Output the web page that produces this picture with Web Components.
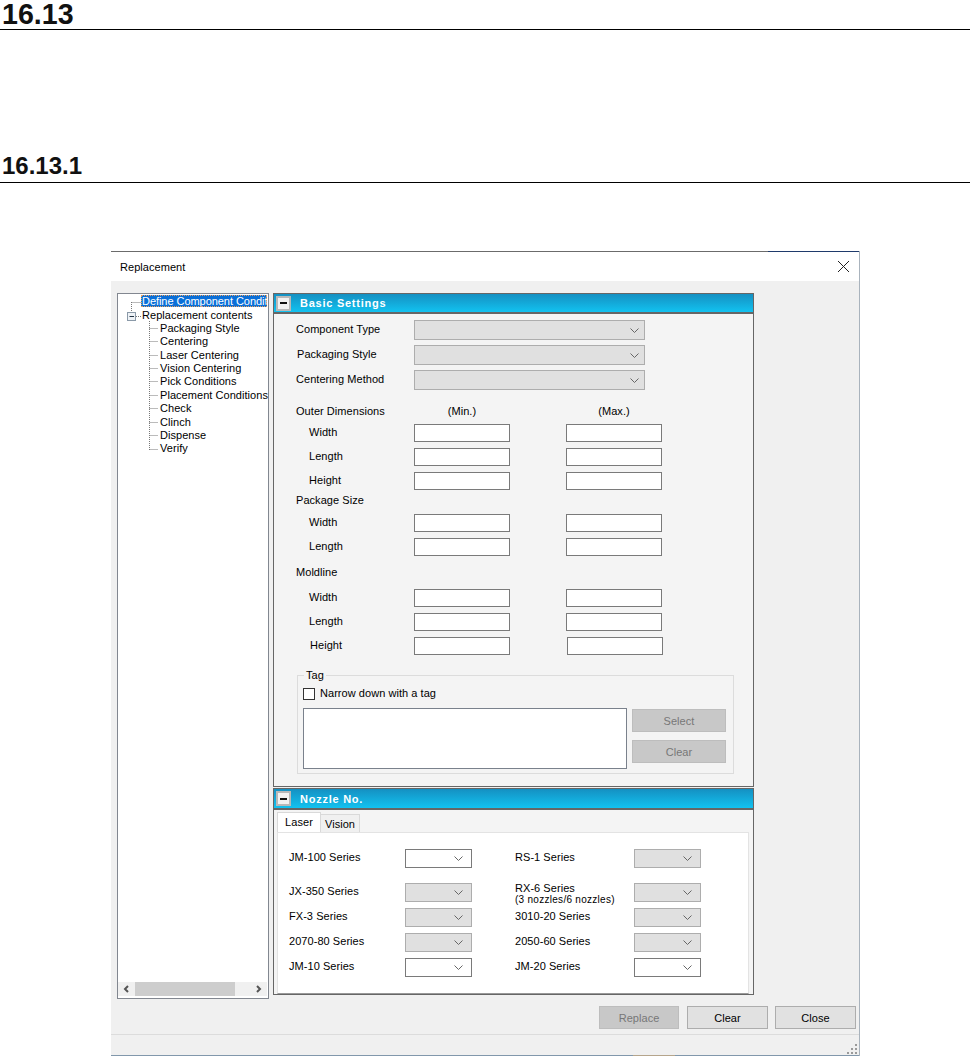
<!DOCTYPE html>
<html lang="en"><head><meta charset="utf-8"><title>Replacement</title>
<style>
html,body{margin:0;padding:0;background:#fff;overflow:hidden;height:1056px}
body{font:11px "Liberation Sans",Arial,sans-serif;letter-spacing:.05px;color:#000}
</style></head><body>
<x-heading size="28.6" style="--top:0px">16.13</x-heading>
<x-heading size="24" style="--top:123px">16.13.1</x-heading>
<x-window title="Replacement">
  <x-tree slot="tree"></x-tree>
  <x-panel heading="Basic Settings" style="--ph:494px;--hh:18px" slot="panels"><x-basic-form></x-basic-form></x-panel>
  <x-panel heading="Nozzle No." style="--ph:207px;--hh:19px;margin-top:1px" slot="panels"><x-nozzle-form></x-nozzle-form></x-panel>
  <x-button slot="actions" disabled style="--w:80px;margin-right:8px">Replace</x-button>
  <x-button slot="actions" style="--w:81px;margin-right:7px">Clear</x-button>
  <x-button slot="actions" style="--w:81px">Close</x-button>
</x-window>
<script>
const chevron='<svg width="9" height="5" viewBox="0 0 9 5" style="display:block"><path d="M.5 .5L4.5 4.5L8.5 .5" fill="none" stroke="#666" stroke-width="1"/></svg>';
class Base extends HTMLElement{
  constructor(){super();this.attachShadow({mode:'open'});}
  render(html){this.shadowRoot.innerHTML=html;}
}
customElements.define('x-heading',class extends Base{connectedCallback(){
  const s=+this.getAttribute('size');
  this.render(`<style>:host{display:block;height:29px;margin-top:var(--top);border-bottom:1px solid #000;box-sizing:content-box}
  div{font:bold ${s}px/1 "Liberation Sans",Arial,sans-serif;letter-spacing:0;color:#111;padding:${s>25?0:1}px 0 0 2px}</style><div><slot></slot></div>`);
}});
customElements.define('x-window',class extends Base{connectedCallback(){
  this.render(`<style>
  :host{display:flex;flex-direction:column;box-sizing:border-box;margin:68px 0 0 111px;width:749px;height:805px;background:#f0f0f0;border-right:1px solid #a9b3bd;position:relative}
  .top{height:1px;background:linear-gradient(to right,#6b6b6b 0 657px,#1f3a6b 657px)}
  .title{height:29px;background:#fff;display:flex;align-items:center;justify-content:space-between;padding:0 9px 0 9px;font-size:11px;letter-spacing:.05px}
  .title svg{display:block}
  .main{display:flex;gap:4px;height:706px;margin:12px 0 0 6px}
  .panels{display:flex;flex-direction:column;width:481px}
  .actions{display:flex;justify-content:flex-end;height:23px;margin:7px 3px 0 0}
  .sep{height:1px;background:#dcdcdc;margin-top:5px}
  .status{flex:1;display:flex;justify-content:flex-end;align-items:flex-end;padding:0 1px 0 0}
  .bot{height:1px;background:linear-gradient(to right,#8197ab 0 522px,#b5a58c 522px 564px,#8197ab 564px)}
  </style>
  <div class="top"></div>
  <div class="title"><span>${this.getAttribute('title')}</span>
    <svg width="13" height="13" viewBox="0 0 13 13"><path d="M1 1L12 12M12 1L1 12" stroke="#222" stroke-width="1" fill="none"/></svg></div>
  <div class="main"><slot name="tree"></slot><div class="panels"><slot name="panels"></slot></div></div>
  <div class="actions"><slot name="actions"></slot></div>
  <div class="sep"></div>
  <div class="status"><svg width="11" height="11" viewBox="0 0 11 11" fill="#9a9a9a"><rect x="8" y="0" width="2" height="2"/><rect x="4" y="4" width="2" height="2"/><rect x="8" y="4" width="2" height="2"/><rect x="0" y="8" width="2" height="2"/><rect x="4" y="8" width="2" height="2"/><rect x="8" y="8" width="2" height="2"/></svg></div>
  <div class="bot"></div>`);
}});
customElements.define('x-tree',class extends Base{connectedCallback(){
  const kids=['Packaging Style','Centering','Laser Centering','Vision Centering','Pick Conditions','Placement Conditions','Check','Clinch','Dispense','Verify'];
  const ys=[34,47,61,74,87,101,114,128,141,155];
  const lines='M13.5 8V18M13.5 8.5H23M18 22.5H23M31.5 27V156'+ys.map(y=>`M31.5 ${y}.5H40`).join('');
  this.render(`<style>
  :host{display:flex;flex-direction:column;box-sizing:border-box;width:152px;height:706px;background:#fff;border:1px solid #828790;position:relative;overflow:hidden}
  .list{flex:1;padding-top:1px;overflow:hidden;white-space:nowrap}
  .row{height:13.4px;line-height:13px;padding-left:24px}
  .kid{padding-left:42px}
  .rep{line-height:14px}
  .sel{margin-left:23px;padding-left:1px;background:#0a6fd8;color:#fff;height:12.4px;margin-bottom:1px;line-height:12px;letter-spacing:-.05px;outline:1px dotted #e8a060;outline-offset:-1px;margin-right:1px}
  svg.lines{position:absolute;left:0;top:0}
  .bar{height:14px;margin:0 1px 2px 0;background:#f0f0f0;display:flex;align-items:center;justify-content:space-between;padding:0 5px;position:relative}
  .thumb{position:absolute;left:17px;width:100px;top:0;bottom:0;background:#cdcdcd}
  </style>
  <div class="list"><div class="row sel">Define Component Condit</div><div class="row rep">Replacement contents</div>
  ${kids.map(k=>`<div class="row kid">${k}</div>`).join('')}</div>
  <svg class="lines" width="60" height="170"><path d="${lines}" fill="none" stroke="#777" stroke-dasharray="1 1"/>
    <rect x="9.5" y="18.5" width="8" height="8" fill="#eef2f6" stroke="#8a99a8"/><path d="M11.5 22.5H16" stroke="#234"/></svg>
  <div class="bar"><svg width="6" height="8" viewBox="0 0 6 8"><path d="M5 1L2 4L5 7" fill="none" stroke="#555" stroke-width="2"/></svg><div class="thumb"></div><svg width="6" height="8" viewBox="0 0 6 8"><path d="M1 1L4 4L1 7" fill="none" stroke="#555" stroke-width="2"/></svg></div>`);
}});
customElements.define('x-panel',class extends Base{connectedCallback(){
  this.render(`<style>
  :host{display:flex;flex-direction:column;box-sizing:border-box;height:var(--ph);width:481px;background:#f4f4f4;border:1px solid #666}
  .hd{height:var(--hh);background:linear-gradient(#1590c2,#12c2f0);border-bottom:2px solid #666;display:flex;align-items:center;flex:none}
  .mn{width:15px;height:15px;box-sizing:border-box;margin-left:2px;background:#f2f2f2;border:2px solid #b8b8b8;display:flex;align-items:center;justify-content:center}
  .mn i{display:block;width:7px;height:2px;background:#111}
  .t{margin-left:9px;color:#fff;font-weight:bold;font-size:11px;letter-spacing:.75px}
  </style><div class="hd"><div class="mn"><i></i></div><span class="t">${this.getAttribute('heading')}</span></div><slot></slot>`);
}});
customElements.define('x-combo',class extends Base{connectedCallback(){
  const on=this.hasAttribute('enabled');
  this.render(`<style>:host{display:flex;align-items:center;justify-content:flex-end;box-sizing:border-box;width:var(--w,67px);height:var(--h,19px);padding-right:var(--pr,8px);
  background:${on?'#fff':'#e0e0e0'};border:1px solid ${on?'#7a7a7a':'#adadad'}}</style>${chevron}`);
}});
customElements.define('x-field',class extends Base{connectedCallback(){
  this.render(`<style>:host{display:block;box-sizing:border-box;width:96px;height:18px;background:#fff;border:1px solid #7a7a7a}</style>`);
}});
customElements.define('x-row',class extends Base{connectedCallback(){
  const ind=this.getAttribute('indent')||22;
  this.render(`<style>:host{display:grid;grid-template-columns:140px 96px 56px 96px;height:var(--h,24px);align-items:start}
  .l{padding:var(--pt,1px) 0 0 ${ind}px;line-height:14px;white-space:nowrap}
  ::slotted([slot=b]){grid-column:4}
  </style><div class="l">${this.getAttribute('label')||''}</div><slot name="a"></slot><span></span><slot name="b"></slot>`);
}});
customElements.define('x-button',class extends Base{connectedCallback(){
  const d=this.hasAttribute('disabled');
  this.render(`<style>:host{display:flex;align-items:center;justify-content:center;box-sizing:border-box;width:var(--w,94px);height:23px;
  background:${d?'#c8c8c8':'#e1e1e1'};border:1px solid ${d?'#bdbdbd':'#adadad'};color:${d?'#777':'#000'}}</style><slot></slot>`);
}});
customElements.define('x-basic-form',class extends Base{connectedCallback(){
  const f=(s='')=>`<x-field slot="a"></x-field><x-field slot="b"${s}></x-field>`;
  this.render(`<style>
  :host{display:block;padding-top:6px}
  x-combo{--w:231px;--h:20px;--pr:5px}
  .group{position:relative;box-sizing:border-box;width:437px;height:99px;margin:20px 0 0 23px;border:1px solid #dcdcdc;padding:12px 7px 0 5px}
  .legend{position:absolute;left:6px;top:-8px;padding:0 2px;background:#f4f4f4;line-height:14px}
  .chk{display:flex;align-items:flex-start;gap:5px;height:13px}
  .chk i{display:block;box-sizing:border-box;width:12px;height:12px;background:#fff;border:1px solid #333}
  .chk span{line-height:12px;margin-top:-1px}
  .b{display:flex;justify-content:space-between;margin-top:7px}
  .ta{box-sizing:border-box;width:324px;height:61px;background:#fff;border:1px solid #7a818c}
  .btns{display:flex;flex-direction:column;gap:8px;margin-top:1px}
  </style>
  <x-row label="Component Type" style="--h:25px;--pt:2px"><x-combo slot="a"></x-combo></x-row>
  <x-row label="Packaging Style" indent="23" style="--h:25px;--pt:2px"><x-combo slot="a"></x-combo></x-row>
  <x-row label="Centering Method" style="--h:20px;--pt:2px"><x-combo slot="a"></x-combo></x-row>
  <x-row label="Outer Dimensions" style="--h:34px;--pt:14px"><span slot="a" style="padding-top:14px;display:block;text-align:center;line-height:14px">(Min.)</span><span slot="b" style="padding-top:14px;display:block;text-align:center;line-height:14px">(Max.)</span></x-row>
  <x-row label="Width" indent="35">${f()}</x-row>
  <x-row label="Length" indent="35">${f()}</x-row>
  <x-row label="Height" indent="35" style="--h:18px">${f()}</x-row>
  <x-row label="Package Size" style="--pt:3px"></x-row>
  <x-row label="Width" indent="35">${f()}</x-row>
  <x-row label="Length" indent="35" style="--h:18px">${f()}</x-row>
  <x-row label="Moldline" style="--h:33px;--pt:9px"></x-row>
  <x-row label="Width" indent="35">${f()}</x-row>
  <x-row label="Length" indent="35">${f()}</x-row>
  <x-row label="Height" indent="36" style="--h:18px">${f(' style="margin-left:1px"')}</x-row>
  <div class="group"><span class="legend">Tag</span>
    <div class="chk"><i></i><span>Narrow down with a tag</span></div>
    <div class="b"><div class="ta"></div><div class="btns"><x-button disabled>Select</x-button><x-button disabled>Clear</x-button></div></div>
  </div>`);
}});
customElements.define('x-nozzle-form',class extends Base{connectedCallback(){
  const rows=[['JM-100 Series',1,'RS-1 Series',0],['JX-350 Series',0,'RX-6 Series<small>(3 nozzles/6 nozzles)</small>',0],['FX-3 Series',0,'3010-20 Series',0],['2070-80 Series',0,'2050-60 Series',0],['JM-10 Series',1,'JM-20 Series',1]];
  const c=e=>`<x-combo${e?' enabled':''}></x-combo>`;
  this.render(`<style>
  :host{display:flex;flex-direction:column;flex:1;padding:2px 4px 0 3px;min-height:0}
  .tabs{display:flex;align-items:flex-end;height:20px;flex:none}
  .tab{box-sizing:border-box;display:flex;align-items:center;justify-content:center}
  .on{width:44px;height:20px;background:#fff;border:1px solid #d9d9d9;border-bottom:0;padding-bottom:1px}
  .off{width:39px;height:18px;background:#f0f0f0;border:1px solid #d9d9d9;border-bottom:0;border-left:0}
  .page{flex:1;box-sizing:border-box;background:#fff;border:1px solid #e3e3e3;border-bottom-color:#999;padding:16px 0 0 11px;display:grid;
    grid-template-columns:116px 67px 43px 119px 67px;grid-template-rows:34px 25px 25px 25px 19px;align-content:start}
  .lb{line-height:14px;white-space:nowrap;padding-top:1px}
  .dbl{line-height:11px;padding:0}
  .dbl small{display:block;font-size:10px;letter-spacing:.28px;line-height:11px}
  i{display:block}
  </style>
  <div class="tabs"><div class="tab on">Laser</div><div class="tab off">Vision</div></div>
  <div class="page">${rows.map(r=>`<div class="lb">${r[0]}</div>${c(r[1])}<i></i><div class="lb${r[2].includes('small')?' dbl':''}">${r[2]}</div>${c(r[3])}`).join('')}</div>`);
}});
</script>
</body></html>
